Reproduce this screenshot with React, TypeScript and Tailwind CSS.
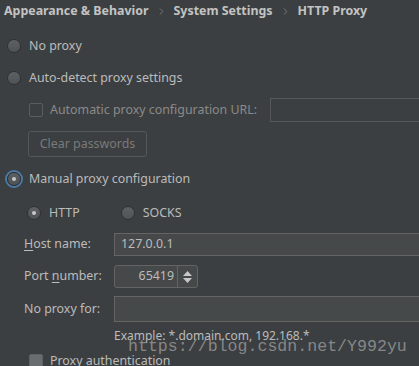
import { ChevronRight } from 'lucide-react';

const font = { fontFamily: '"Noto Sans", "Open Sans", Arial, sans-serif' };

function Radio({ checked = false, focused = false }: { checked?: boolean; focused?: boolean }) {
  return (
    <span
      className={`relative flex items-center justify-center w-[14px] h-[14px] rounded-full border border-[#2e3032] bg-gradient-to-b from-[#5e6163] to-[#505355] shrink-0 ${
        focused ? 'ring-[2px] ring-[#4a7aa8]' : ''
      }`}
    >
      {checked && <span className="w-[4px] h-[4px] rounded-full bg-[#c8c8c8]" />}
    </span>
  );
}

function Checkbox({ dim = false }: { dim?: boolean }) {
  return (
    <span
      className={`w-[14px] h-[14px] rounded-[2px] shrink-0 ${
        dim ? 'border border-[#5a5d5f] bg-transparent' : 'border border-[#5e6163] bg-[#6a6d6f]'
      }`}
    />
  );
}

export default function App() {
  return (
    <div className="relative w-[419px] h-[366px] overflow-hidden bg-[#3c3f41] text-[#bbbbbb] text-[12.4px]" style={font}>
      {/* Breadcrumb */}
      <div className="flex items-center h-[22px] pl-[4px] font-bold text-[12.4px] text-[#c3c3c3]">
        <span>Appearance &amp; Behavior</span>
        <ChevronRight className="w-[11px] h-[11px] mx-[7px] text-[#8c8c8c]" strokeWidth={1.5} />
        <span>System Settings</span>
        <ChevronRight className="w-[11px] h-[11px] mx-[7px] text-[#8c8c8c]" strokeWidth={1.5} />
        <span>HTTP Proxy</span>
      </div>

      {/* No proxy */}
      <div className="flex items-center gap-[8px] pl-[7px] mt-[15px] h-[18px]">
        <Radio />
        <span>No proxy</span>
      </div>

      {/* Auto-detect */}
      <div className="flex items-center gap-[8px] pl-[7px] mt-[14px] h-[18px]">
        <Radio />
        <span>Auto-detect proxy settings</span>
      </div>

      <div className="flex items-center pl-[29px] mt-[11px] h-[24px]">
        <Checkbox dim />
        <span className="ml-[7px] text-[#8a8a8a]">Automatic proxy configuration URL:</span>
        <div className="ml-[13px] flex-1 h-[24px] border border-[#555758] -mr-[10px]" />
      </div>

      <div className="pl-[28px] mt-[9px]">
        <button className="w-[119px] h-[26px] rounded-[3px] border border-[#555758] text-[#7a7a7a] text-[12.4px]">
          Clear passwords
        </button>
      </div>

      {/* Manual */}
      <div className="flex items-center gap-[8px] pl-[7px] mt-[13px] h-[18px]">
        <Radio checked focused />
        <span>Manual proxy configuration</span>
      </div>

      <div className="flex items-center pl-[27px] mt-[16px] h-[18px]">
        <Radio checked />
        <span className="ml-[8px]">HTTP</span>
        <span className="ml-[41px]"><Radio /></span>
        <span className="ml-[8px]">SOCKS</span>
      </div>

      <div className="grid grid-cols-[90px_1fr] items-center pl-[24px] mt-[11px]">
        <span>
          <span className="underline underline-offset-2">H</span>ost name:
        </span>
        <div className="h-[23px] border border-[#646464] bg-[#45494a] flex items-center pl-[6px] text-[#bbbbbb] -mr-[10px]">
          127.0.0.1
        </div>

        <span className="mt-[9px]">
          Port <span className="underline underline-offset-2">n</span>umber:
        </span>
        <div className="mt-[9px] flex h-[23px] w-[84px] rounded-[3px] border border-[#646464] bg-[#45494a]">
          <span className="flex-1 flex items-center justify-end pr-[3px]">65419</span>
          <span className="w-[20px] border-l border-[#646464] flex flex-col items-center justify-center gap-[2px]">
            <svg width="9" height="5" viewBox="0 0 9 5"><path d="M0 5 L4.5 0 L9 5 Z" fill="#c8c8c8" /></svg>
            <svg width="9" height="5" viewBox="0 0 9 5"><path d="M0 0 L4.5 5 L9 0 Z" fill="#c8c8c8" /></svg>
          </span>
        </div>

        <span className="mt-[8px]">No proxy for:</span>
        <div className="mt-[8px] h-[26px] border border-[#646464] bg-[#45494a] -mr-[10px]" />
      </div>

      <div className="pl-[114px] mt-[5px] text-[12px] text-[#bbbbbb]">Example: *.domain.com, 192.168.*</div>

      <div className="flex items-center pl-[29px] mt-[7px] h-[18px]">
        <Checkbox />
        <span className="ml-[7px]">
          Proxy <span className="underline underline-offset-2">a</span>uthentication
        </span>
      </div>

      {/* watermark */}
      <div
        className="absolute left-[128px] top-[337px] text-[16.6px] leading-[20px] text-[#a8a8a8]/70"
        style={{ fontFamily: '"Liberation Mono", monospace' }}
      >
        https://blog.csdn.net/Y992yu
      </div>
    </div>
  );
}
